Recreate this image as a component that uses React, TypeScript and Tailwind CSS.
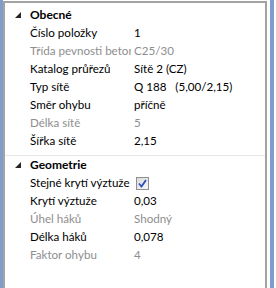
import React from 'react';

type Row = { label: string; value?: string; disabled?: boolean; check?: boolean };

const groups: { title: string; rows: Row[] }[] = [
  {
    title: 'Obecné',
    rows: [
      { label: 'Číslo položky', value: '1' },
      { label: 'Třída pevnosti betonu', value: 'C25/30', disabled: true },
      { label: 'Katalog průřezů', value: 'Sítě 2 (CZ)' },
      { label: 'Typ sítě', value: 'Q 188   (5,00/2,15)' },
      { label: 'Směr ohybu', value: 'příčně' },
      { label: 'Délka sítě', value: '5', disabled: true },
      { label: 'Šířka sítě', value: '2,15' },
    ],
  },
  {
    title: 'Geometrie',
    rows: [
      { label: 'Stejné krytí výztuže', check: true },
      { label: 'Krytí výztuže', value: '0,03' },
      { label: 'Úhel háků', value: 'Shodný', disabled: true },
      { label: 'Délka háků', value: '0,078' },
      { label: 'Faktor ohybu', value: '4', disabled: true },
    ],
  },
];

const Glyph = () => (
  <svg width="6" height="6" viewBox="0 0 6 6" className="block">
    <polygon points="6,0 6,6 0,6" fill="#262626" />
  </svg>
);

const Check = () => (
  <div className="w-[13px] h-[13px] border border-[#8f8f8f] bg-gradient-to-br from-[#dcdcdc] to-[#f7f7f7] flex items-center justify-center">
    <svg width="9" height="9" viewBox="0 0 9 9">
      <path d="M1 4.5 L3.5 7.5 L8 1" stroke="#2a4ec0" strokeWidth="1.8" fill="none" />
    </svg>
  </div>
);

export default function App() {
  return (
    <div className="w-[276px] h-[288px] flex bg-white overflow-hidden" style={{ fontFamily: 'Lato, "Noto Sans", sans-serif' }}>
      <div className="w-[3px] bg-[#7f9dca]" />
      <div className="w-[264px] mt-px border-l-2 border-t-2 border-r-2 border-[#a3a3a3] pt-[3px] text-[11.6px] leading-[18px]">
        {groups.map((g, gi) => (
          <div key={g.title} className={gi > 0 ? 'border-t border-[#e6e6e6] mt-[5px]' : ''}>
            <div className="h-[18px] flex items-center">
              <div className="w-[25px] pl-[10px] flex items-center"><Glyph /></div>
              <span className="font-bold text-black text-[12px]">{g.title}</span>
            </div>
            {g.rows.map((r) => (
              <div key={r.label} className="h-[18px] flex items-center">
                <div className={`w-[101px] ml-[25px] overflow-hidden whitespace-nowrap ${r.disabled ? 'text-[#8e8e8e]' : 'text-black'}`}>{r.label}</div>
                <div className={`pl-[3px] whitespace-pre ${r.disabled ? 'text-[#8e8e8e]' : 'text-black'}`}>
                  {r.check ? <div className="pl-[2px]"><Check /></div> : r.value}
                </div>
              </div>
            ))}
          </div>
        ))}
      </div>
      <div className="w-[3px] bg-white" />
      <div className="w-[4px] bg-[#7f9dca]" />
    </div>
  );
}
